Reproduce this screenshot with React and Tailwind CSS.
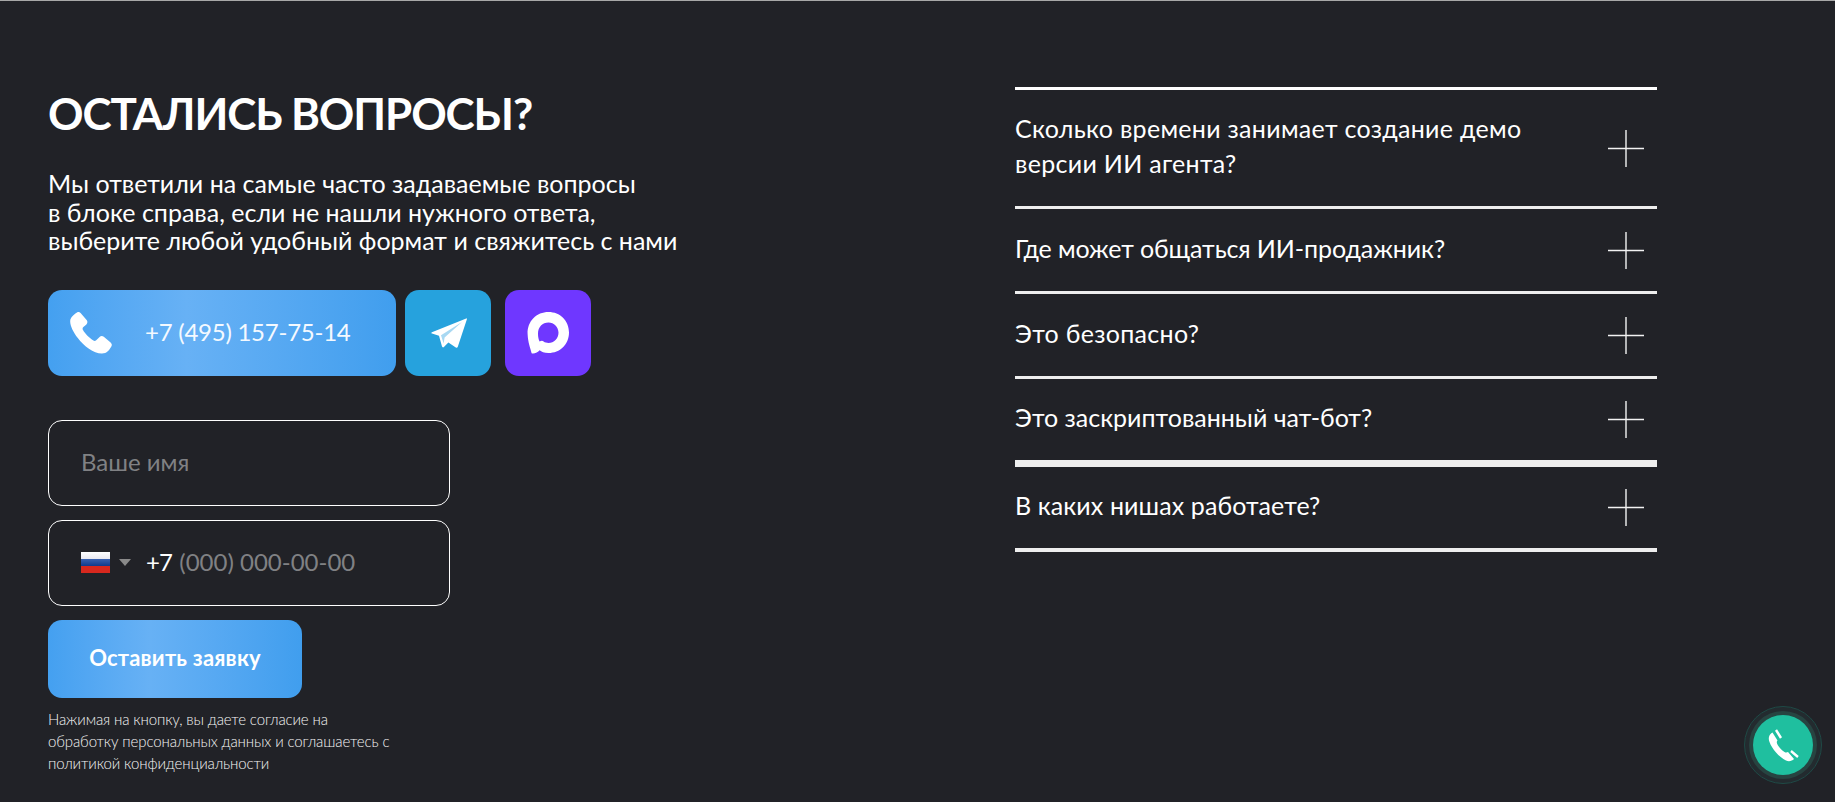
import React from "react";

const faqItems = [
  { lines: ["Сколько времени занимает создание демо", "версии ИИ агента?"], rowClass: "h-[119px] border-b-[3px] border-[#eeeeee]", textClass: "tracking-[0.3px]" },
  { lines: ["Где может общаться ИИ-продажник?"], rowClass: "h-[85px] border-b-[3px] border-[#eeeeee]", textClass: "tracking-[-0.1px]" },
  { lines: ["Это безопасно?"], rowClass: "h-[85px] border-b-[3px] border-[#eeeeee]", textClass: "tracking-[0.3px]" },
  { lines: ["Это заскриптованный чат-бот?"], rowClass: "h-[88px] border-b-[7px] border-[#eeeeee]", textClass: "tracking-[0px]" },
  { lines: ["В каких нишах работаете?"], rowClass: "h-[85px] border-b-4 border-[#eeeeee]", textClass: "tracking-[0.1px]" },
];

const PlusIcon = () => (
  <svg width="36" height="37" viewBox="0 0 36 37" fill="none" className="shrink-0">
    <path d="M18 0V37M0 18.5H36" stroke="#f2f2f2" strokeWidth="1.4" />
  </svg>
);

const PhoneIcon = () => (
  <svg width="42" height="42" viewBox="0 0 42 42" className="shrink-0">
    <path
      d="M7 0.6C8.2 -0.2 9.6 0 10.6 1L16.6 8C17.8 9.4 17.6 11.2 16.4 12.4L13.4 15C12.4 16 12.4 17 13 18C15 21.6 19.4 26 23.4 28.6C24.4 29.2 25.4 29 26.2 28.2L29.6 25C30.8 23.8 32.4 23.8 33.8 24.8L40.6 30.4C42 31.6 42.2 33.2 41.2 34.8C39.6 37.6 36.8 41.6 32 41.6C24 41.8 13.8 34 7.8 26C3.4 20 0 13.8 0.2 9C0.4 5.4 3.6 2.8 7 0.6Z"
      fill="#ffffff"
    />
  </svg>
);

const TelegramIcon = () => (
  <svg width="36" height="30" viewBox="0 0 36 30" className="ml-[1px]">
    <path
      d="M35.2 0.4 L0.9 14.2 C0.2 14.5 0.3 15.4 1 15.6 L8 17.8 L11 28.6 C11.3 29.5 12.3 29.7 12.9 29 L17.4 24.6 L24.8 29.6 C25.6 30.1 26.6 29.7 26.8 28.8 L35.9 1.2 C36 0.6 35.7 0.2 35.2 0.4 Z"
      fill="#ffffff"
    />
    <path d="M31 4 L10 17.2 L12.6 25.6 L13.6 19.6 Z" fill="#a8d8f2" />
  </svg>
);

const MaxIcon = () => (
  <svg width="42" height="42" viewBox="0 0 42 42">
    <path
      fillRule="evenodd"
      d="M21.5 0C33 0 42 8.5 42 20.5C42 32.5 33 41 21.5 41C17 41 14.5 39.6 12.6 38.2C11 40.4 7 42 4.6 41.2C3.4 36 1 31 0.6 22C0.2 9 9.5 0 21.5 0ZM21.5 10.5C15.5 10.5 11 15 11 21.5C11 25 11.6 27.6 12.6 29.6C14.2 28.6 15.6 28.4 16.6 29.6C18 30.6 19.6 31 21.5 31C27 31 31.5 26.6 31.5 20.8C31.5 15 27 10.5 21.5 10.5Z"
      fill="#ffffff"
    />
  </svg>
);

const RuFlag = () => (
  <div className="flex h-[21px] w-[29px] shrink-0 flex-col">
    <div className="h-[7px] bg-gradient-to-b from-[#ffffff] to-[#e8e8f0]" />
    <div className="h-[7px] bg-gradient-to-b from-[#3a62b0] to-[#0f3a8c]" />
    <div className="h-[7px] bg-[#d7281e]" />
  </div>
);

const CallWidget = () => (
  <div className="fixed right-[13px] bottom-[18px] flex h-[78px] w-[78px] items-center justify-center rounded-full border border-[#1f4a46] bg-[#232b2f]">
    <div className="flex h-[68px] w-[68px] items-center justify-center rounded-full bg-[#274441]">
      <div className="flex h-[60px] w-[60px] items-center justify-center rounded-full bg-[#1fbf9f]">
        <svg width="32" height="34" viewBox="0 0 32 34" fill="none">
          <path
            d="M5.5 4.5L10.5 12.5C9.5 13.5 9.5 15 11 17.5C13 20.5 15 22.5 17.5 24C19 24.8 20 24.5 21 24L27 31C25 33 22 34 19 32.5C12 29 5 21 2.5 14C1 10 2 6.5 5.5 4.5Z"
            fill="#ffffff"
          />
          <path d="M9 2L14 10M24 23L31 29" stroke="#ffffff" strokeWidth="2.4" />
        </svg>
      </div>
    </div>
  </div>
);

const App = () => {
  return (
    <div className="relative flex h-[802px] overflow-hidden border-t border-[#a8a8a8] bg-[#212227] pt-[86px] pl-12 font-['Lato',sans-serif] text-white">
      {/* Left column */}
      <div className="w-[967px] shrink-0">
        <h2 className="text-[44px] leading-[52px] font-bold tracking-[-1.1px]">ОСТАЛИСЬ ВОПРОСЫ?</h2>
        <p className="mt-[30px] text-[25px] leading-[28.6px]">
          Мы ответили на самые часто задаваемые вопросы
          <br />в блоке справа, если не нашли нужного ответа,
          <br />выберите любой удобный формат и свяжитесь с нами
        </p>

        <div className="mt-[35px] flex">
          <a className="flex h-[86px] w-[348px] items-center rounded-[14px] bg-gradient-to-r from-[#44a0f0] via-[#67b1f5] via-40% to-[#409eee] pl-[22px]">
            <PhoneIcon />
            <span className="ml-[33px] pb-[2px] text-[24px] tracking-[-0.25px] text-[#f4f9ff]">+7 (495) 157-75-14</span>
          </a>
          <a className="ml-[9px] flex h-[86px] w-[86px] items-center justify-center rounded-[14px] bg-[#26a2dd]">
            <TelegramIcon />
          </a>
          <a className="ml-[14px] flex h-[86px] w-[86px] items-center justify-center rounded-[14px] bg-[#6f37ff]">
            <MaxIcon />
          </a>
        </div>

        <form className="mt-[44px] flex flex-col items-start gap-[14px]">
          <div className="flex h-[86px] w-[402px] items-center rounded-[14px] border border-white pb-[2px] pl-8 text-[24px] text-[#808184]">
            Ваше имя
          </div>
          <div className="flex h-[86px] w-[402px] items-center rounded-[14px] border border-white pl-8 text-[24px]">
            <RuFlag />
            <span className="ml-[9px] h-0 w-0 border-x-[6px] border-t-[7px] border-x-transparent border-t-[#8a8a8a]" />
            <span className="ml-[15px] pb-[2px] tracking-[-0.8px]">+7</span>
            <span className="ml-[7px] pb-[2px] text-[#808184]">(000) 000-00-00</span>
          </div>
          <button
            type="button"
            className="h-[78px] w-[254px] rounded-[14px] bg-gradient-to-r from-[#44a0f0] via-[#67b1f5] via-40% to-[#409eee] pb-[3px] text-[22px] font-bold tracking-[0.2px]"
          >
            Оставить заявку
          </button>
        </form>
        <p className="mt-[10px] text-[15px] leading-[22px] font-light tracking-[-0.12px] text-[#f4f4f4]">
          Нажимая на кнопку, вы даете согласие на
          <br />
          обработку персональных данных и соглашаетесь с
          <br />
          политикой конфиденциальности
        </p>
      </div>

      {/* FAQ */}
      <div className="w-[642px] shrink-0">
        <div className="border-t-[3px] border-white">
          {faqItems.map((item) => (
            <div key={item.lines[0]} className={`flex items-center justify-between pr-[13px] ${item.rowClass}`}>
              <p className={`pb-[4px] text-[25px] leading-[35px] ${item.textClass}`}>
                {item.lines.map((line, i) => (
                  <span key={i} className="block">
                    {line}
                  </span>
                ))}
              </p>
              <PlusIcon />
            </div>
          ))}
        </div>
      </div>

      <CallWidget />
    </div>
  );
};

export default App;
